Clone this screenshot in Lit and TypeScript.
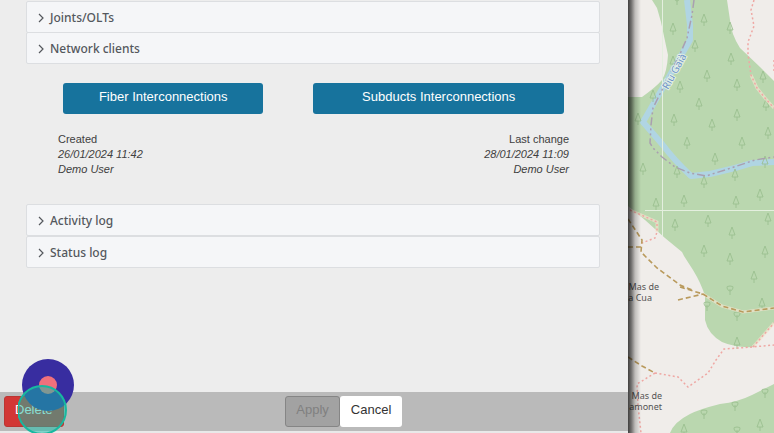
import { LitElement, html, svg, css } from "lit";
import { customElement, property } from "lit/decorators.js";

@customElement("section-row")
class SectionRow extends LitElement {
  @property() label = "";

  static styles = css`
    :host { display: block; }
    .row {
      display: flex;
      align-items: center;
      gap: 6px;
      width: 100%;
      height: 32px;
      padding: 2px 11px 0;
      border: 1px solid #dcdee1;
      border-radius: 2px;
      background: #f5f6f8;
      color: #54585d;
      font: 500 12px/20px "Noto Sans", sans-serif;
      text-align: left;
      box-sizing: border-box;
    }
    .chevron { width: 6px; height: 10px; fill: none; stroke: #55585d; stroke-width: 1.2; }
  `;

  render() {
    return html`<button class="row" type="button" aria-expanded="false">
      <svg class="chevron" viewBox="0 0 6 10" aria-hidden="true"><path d="M1 1l4 4-4 4" /></svg>
      ${this.label}
    </button>`;
  }
}

const pines = [
  [673, 29], [704, 20], [695, 46], [730, 28], [731, 59], [707, 76], [737, 85], [680, 87], [653, 96],
  [699, 104], [737, 115], [638, 119], [674, 120], [712, 125], [763, 77], [766, 105], [768, 133],
  [687, 143], [742, 143], [673, 62], [715, 159], [677, 172], [643, 169], [735, 175], [704, 182],
  [765, 162], [760, 195], [656, 204], [684, 201], [736, 202], [675, 225], [708, 221], [732, 233],
  [768, 219], [704, 251], [730, 259], [765, 252], [754, 277], [762, 304], [737, 343], [684, 430], [760, 425],
];
const broadleaves = [
  [677, 0], [730, 290], [707, 306], [737, 316], [704, 414], [735, 406], [765, 393], [737, 431],
];

@customElement("terrain-map")
class TerrainMap extends LitElement {
  static styles = css`
    :host { display: flex; position: relative; background: #f0edea; overflow: hidden; }
    :host::before {
      content: "";
      position: absolute;
      inset: 0 auto 0 0;
      width: 13px;
      background: linear-gradient(90deg, #000b, #0008 25%, #0003 55%, #0000);
    }
    .map { flex: 1; min-width: 0; display: block; }
    .wood { fill: #bad7af; }
    .river { fill: none; stroke: #b0d5e3; stroke-width: 6; stroke-linejoin: round; }
    .tile { stroke: #e4efdf; stroke-width: 1; }
    .border { fill: none; stroke: #a99fb0; stroke-width: 1.5; stroke-dasharray: 8 3 2 3 2 3; }
    .foot { fill: none; stroke: #efa7a3; stroke-width: 1.5; stroke-dasharray: 2 2.5; }
    .casing { fill: none; stroke: #f1e4cf; stroke-width: 3; opacity: 0.7; }
    .track { fill: none; stroke: #b99a5c; stroke-width: 1.6; stroke-dasharray: 5 3; }
    .tree { fill: none; stroke: #9bc090; stroke-width: 0.9; }
    .label { font: 9px "Noto Sans", sans-serif; fill: #555; }
    .water { font: 10px "Noto Sans", sans-serif; fill: #6d93c8; stroke: #e3efe6; stroke-width: 2; paint-order: stroke; }
  `;

  render() {
    return html`<svg class="map" viewBox="628 0 146 433" preserveAspectRatio="xMinYMin slice" role="img" aria-label="Map">
      <path class="wood" d="M652 0L657 8L661 22L668 55Q667 72 662 80Q656 87 642 97H628V206L645 220L665 238L682 252L684 256L693 270Q701 283 705 296V320Q708 334 722 342Q736 348 753 347L774 323V81L760 67L740 48Q731 34 730 20L727 0Z" />
      <path class="wood" d="M774 384L752 395Q738 402 720 404Q700 409 690 414Q674 422 670 433H774Z" />
      <path class="river" d="M687 0L690 25V40L682 54L665 84L643 122L662 144Q674 160 691 176L710 174L735 168L752 163L774 162" />
      ${pines.map(([x, y]) => svg`<path class="tree" d="M${x} ${y - 6}l-3 8h6zM${x} ${y + 2}v4" />`)}
      ${broadleaves.map(([x, y]) => svg`<path class="tree" d="M${x} ${y + 5}v-6m-3-1q-1-2 3-2q4 0 3 2q-1 3-3 3q-2 0-3-3" />`)}
      <path class="tile" d="M662.5 0V236M645 210.5H774" />
      <path class="border" d="M694 0L692 15L687 38L680 54L665 84L653 108L651 125L650 143L653 148L662 157L675 167L690 173L706 176L725 170L755 160L774 157" />
      <path class="casing" d="M751 75L757 88L765 98L774 108M630 210L657 222V232M703 294L722 306L743 312L774 308M753 347L774 323" />
      <path class="foot" d="M754 0L751 10L754 26L748 42V54L751 75L757 88L765 98L774 108" />
      <path class="foot" d="M630 210L657 222V232L655 238L642 243M655 373L678 377L688 387L708 373L716 360L724 349L752 347L774 345M753 347L774 323M655 373L637 384L638 405L641 433M774 60V72" />
      <path class="track" d="M628 219L642 240L641 252L657 268L680 285L692 290M628 247H642M680 287L703 294L722 306L743 312L774 308M678 300L703 294M628 357L642 366L655 373" />
      <text class="water" transform="translate(668 90) rotate(-61)">Riu Gaià</text>
      <text class="label" text-anchor="end" x="659" y="290">Mas de</text>
      <text class="label" text-anchor="end" x="652" y="301">a Cua</text>
      <text class="label" text-anchor="end" x="662" y="399">Mas de</text>
      <text class="label" text-anchor="end" x="662" y="410">amonet</text>
    </svg>`;
  }
}

@customElement("app-root")
class AppRoot extends LitElement {
  static styles = css`
    :host {
      display: flex;
      min-height: 100vh;
      overflow: hidden;
      font-family: "Liberation Sans", Arial, sans-serif;
      color: #404040;
    }
    .panel {
      flex: 314 1 0;
      min-width: 0;
      display: flex;
      flex-direction: column;
      position: relative;
      background: #ededed;
    }
    .terrain { flex: 73 1 0; min-width: 0; }
    .content { flex: 1; padding: 1px 28px 0 26px; }
    .joined { margin-bottom: -1px; }
    .links { display: flex; gap: 50px; padding: 20px 36px 0 37px; }
    .link {
      height: 31px;
      padding: 0 0 4px;
      border: 0;
      border-radius: 3px;
      background: #17739d;
      color: #fff;
      font: 13px/16px "Liberation Sans", Arial, sans-serif;
    }
    .fiber { flex: 4 1 0; }
    .subducts { flex: 5 1 0; }
    .history {
      display: flex;
      justify-content: space-between;
      padding: 18px 31px 27px 32px;
      font-size: 11px;
      line-height: 15px;
    }
    .history p { margin: 0; }
    .value { font-style: italic; }
    .end { text-align: right; }
    .footer {
      display: flex;
      padding: 4px;
      background: #bababa;
      border-bottom: 2px solid #e9e9e9;
    }
    .action {
      height: 31px;
      padding: 0 10px 4px;
      border: 1px solid transparent;
      border-radius: 3px;
      font: 13px/20px "Liberation Sans", Arial, sans-serif;
      box-sizing: border-box;
    }
    .delete { background: #d23735; border-color: #bb3532; color: #fff; }
    .center { flex: 1; display: flex; justify-content: center; }
    .apply { background: #a2a2a2; border-color: #858585; color: #808080; }
    .cancel { background: #fff; color: #333; }
    .pointer { position: absolute; left: 18px; bottom: 0; width: 56px; height: 76px; pointer-events: none; overflow: hidden; }
  `;

  render() {
    return html`
      <main class="panel">
        <div class="content">
          <section-row class="joined" label="Joints/OLTs"></section-row>
          <section-row class="joined" label="Network clients"></section-row>
          <div class="links">
            <button class="link fiber" type="button">Fiber Interconnections</button>
            <button class="link subducts" type="button">Subducts Interconnections</button>
          </div>
          <div class="history">
            <div>
              <p>Created</p>
              <p class="value">26/01/2024 11:42</p>
              <p class="value">Demo User</p>
            </div>
            <div class="end">
              <p>Last change</p>
              <p class="value">28/01/2024 11:09</p>
              <p class="value">Demo User</p>
            </div>
          </div>
          <section-row label="Activity log"></section-row>
          <section-row label="Status log"></section-row>
        </div>
        <footer class="footer">
          <button class="action delete" type="button">Delete</button>
          <div class="center">
            <button class="action apply" type="button" disabled>Apply</button>
            <button class="action cancel" type="button">Cancel</button>
          </div>
        </footer>
        <svg class="pointer" viewBox="0 0 56 76" aria-hidden="true">
          <circle cx="30" cy="28" r="26" fill="#382da0" />
          <circle cx="30" cy="28" r="9" fill="#f0707c" />
          <circle cx="24" cy="53" r="24" fill="#12bda8" fill-opacity="0.5" stroke="#18b89f" stroke-width="2" />
        </svg>
      </main>
      <terrain-map class="terrain"></terrain-map>
    `;
  }
}
